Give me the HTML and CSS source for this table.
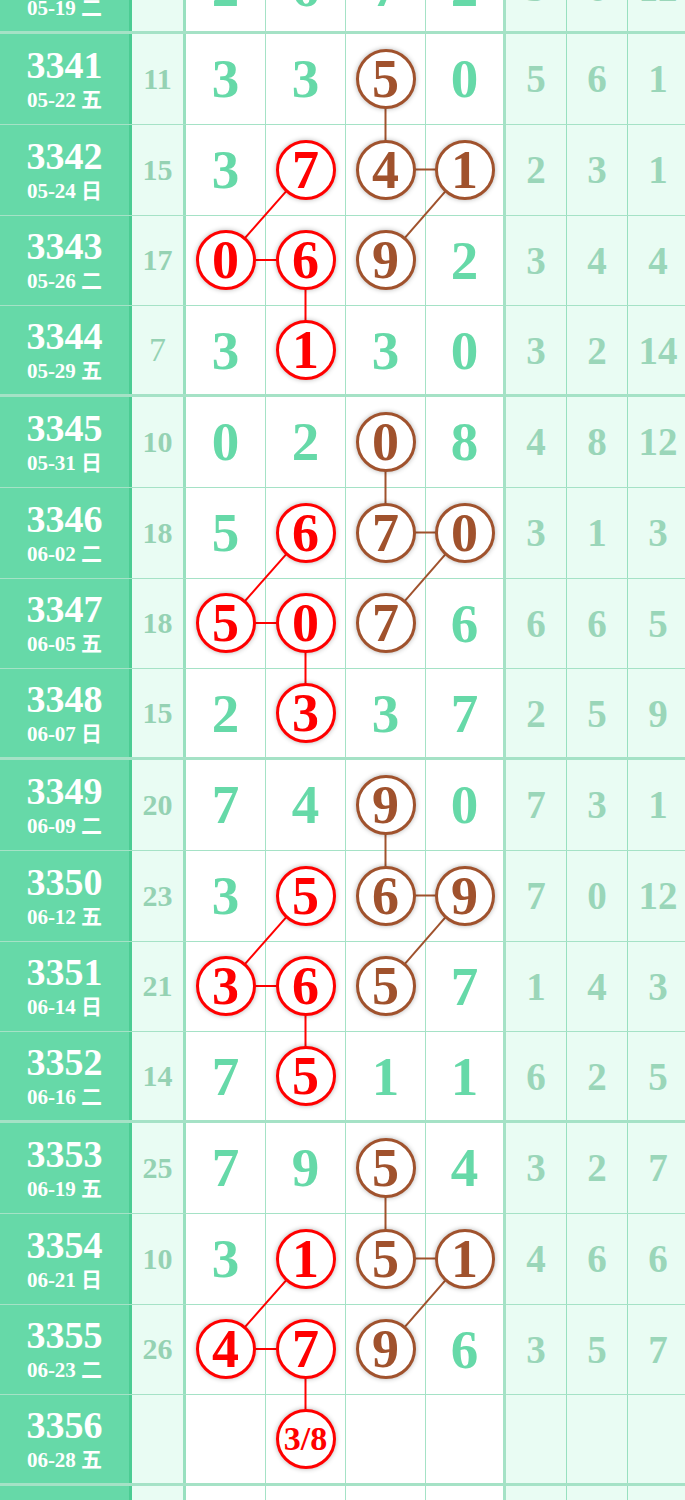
FILE: index.html
```html
<!DOCTYPE html>
<html lang="zh">
<head>
    <meta charset="UTF-8">
    <meta name="viewport" content="width=device-width, initial-scale=1.0">
    <title>走势图</title>
    <link rel="stylesheet" href="styles.css">
</head>
<body>
    <div class="chart">
        <svg class="links" width="689" height="1634" viewBox="0 0 689 1634">
            <g id="links">
                <g class="brown-line">
                    <line x1="385.5" y1="135.6" x2="385.5" y2="226.4" />
                    <line x1="385.5" y1="226.4" x2="464.5" y2="226.4" />
                    <line x1="464.5" y1="226.4" x2="385.5" y2="317.1" />
                </g>
                <g class="red-line">
                    <line x1="305.5" y1="226.4" x2="225.5" y2="317.1" />
                    <line x1="225.5" y1="317.1" x2="305.5" y2="317.1" />
                    <line x1="305.5" y1="317.1" x2="305.5" y2="406.9" />
                </g>
            </g>
            <use href="#links" y="363" />
            <use href="#links" y="726" />
            <use href="#links" y="1089" />
        </svg>

        <div class="row end">
            <div class="c-id"><b>3340</b><small>05-19 二</small></div>
            <div class="c-sum">17</div>
            <div class="c-num">2</div><div class="c-num">6</div><div class="c-num">7</div><div class="c-num end">2</div>
            <div class="c-tail">3</div><div class="c-tail">6</div><div class="c-tail">12</div>
        </div>

        <div class="row">
            <div class="c-id"><b>3341</b><small>05-22 五</small></div>
            <div class="c-sum">11</div>
            <div class="c-num">3</div><div class="c-num">3</div><div class="c-num"><span class="ball brown">5</span></div><div class="c-num end">0</div>
            <div class="c-tail">5</div><div class="c-tail">6</div><div class="c-tail">1</div>
        </div>
        <div class="row">
            <div class="c-id"><b>3342</b><small>05-24 日</small></div>
            <div class="c-sum">15</div>
            <div class="c-num">3</div><div class="c-num"><span class="ball red">7</span></div><div class="c-num"><span class="ball brown">4</span></div><div class="c-num end"><span class="ball brown">1</span></div>
            <div class="c-tail">2</div><div class="c-tail">3</div><div class="c-tail">1</div>
        </div>
        <div class="row">
            <div class="c-id"><b>3343</b><small>05-26 二</small></div>
            <div class="c-sum">17</div>
            <div class="c-num"><span class="ball red">0</span></div><div class="c-num"><span class="ball red">6</span></div><div class="c-num"><span class="ball brown">9</span></div><div class="c-num end">2</div>
            <div class="c-tail">3</div><div class="c-tail">4</div><div class="c-tail">4</div>
        </div>
        <div class="row end">
            <div class="c-id"><b>3344</b><small>05-29 五</small></div>
            <div class="c-sum thin">7</div>
            <div class="c-num">3</div><div class="c-num"><span class="ball red">1</span></div><div class="c-num">3</div><div class="c-num end">0</div>
            <div class="c-tail">3</div><div class="c-tail">2</div><div class="c-tail">14</div>
        </div>

        <div class="row">
            <div class="c-id"><b>3345</b><small>05-31 日</small></div>
            <div class="c-sum">10</div>
            <div class="c-num">0</div><div class="c-num">2</div><div class="c-num"><span class="ball brown">0</span></div><div class="c-num end">8</div>
            <div class="c-tail">4</div><div class="c-tail">8</div><div class="c-tail">12</div>
        </div>
        <div class="row">
            <div class="c-id"><b>3346</b><small>06-02 二</small></div>
            <div class="c-sum">18</div>
            <div class="c-num">5</div><div class="c-num"><span class="ball red">6</span></div><div class="c-num"><span class="ball brown">7</span></div><div class="c-num end"><span class="ball brown">0</span></div>
            <div class="c-tail">3</div><div class="c-tail">1</div><div class="c-tail">3</div>
        </div>
        <div class="row">
            <div class="c-id"><b>3347</b><small>06-05 五</small></div>
            <div class="c-sum">18</div>
            <div class="c-num"><span class="ball red">5</span></div><div class="c-num"><span class="ball red">0</span></div><div class="c-num"><span class="ball brown">7</span></div><div class="c-num end">6</div>
            <div class="c-tail">6</div><div class="c-tail">6</div><div class="c-tail">5</div>
        </div>
        <div class="row end">
            <div class="c-id"><b>3348</b><small>06-07 日</small></div>
            <div class="c-sum">15</div>
            <div class="c-num">2</div><div class="c-num"><span class="ball red">3</span></div><div class="c-num">3</div><div class="c-num end">7</div>
            <div class="c-tail">2</div><div class="c-tail">5</div><div class="c-tail">9</div>
        </div>

        <div class="row">
            <div class="c-id"><b>3349</b><small>06-09 二</small></div>
            <div class="c-sum">20</div>
            <div class="c-num">7</div><div class="c-num">4</div><div class="c-num"><span class="ball brown">9</span></div><div class="c-num end">0</div>
            <div class="c-tail">7</div><div class="c-tail">3</div><div class="c-tail">1</div>
        </div>
        <div class="row">
            <div class="c-id"><b>3350</b><small>06-12 五</small></div>
            <div class="c-sum">23</div>
            <div class="c-num">3</div><div class="c-num"><span class="ball red">5</span></div><div class="c-num"><span class="ball brown">6</span></div><div class="c-num end"><span class="ball brown">9</span></div>
            <div class="c-tail">7</div><div class="c-tail">0</div><div class="c-tail">12</div>
        </div>
        <div class="row">
            <div class="c-id"><b>3351</b><small>06-14 日</small></div>
            <div class="c-sum">21</div>
            <div class="c-num"><span class="ball red">3</span></div><div class="c-num"><span class="ball red">6</span></div><div class="c-num"><span class="ball brown">5</span></div><div class="c-num end">7</div>
            <div class="c-tail">1</div><div class="c-tail">4</div><div class="c-tail">3</div>
        </div>
        <div class="row end">
            <div class="c-id"><b>3352</b><small>06-16 二</small></div>
            <div class="c-sum">14</div>
            <div class="c-num">7</div><div class="c-num"><span class="ball red">5</span></div><div class="c-num">1</div><div class="c-num end">1</div>
            <div class="c-tail">6</div><div class="c-tail">2</div><div class="c-tail">5</div>
        </div>

        <div class="row">
            <div class="c-id"><b>3353</b><small>06-19 五</small></div>
            <div class="c-sum">25</div>
            <div class="c-num">7</div><div class="c-num">9</div><div class="c-num"><span class="ball brown">5</span></div><div class="c-num end">4</div>
            <div class="c-tail">3</div><div class="c-tail">2</div><div class="c-tail">7</div>
        </div>
        <div class="row">
            <div class="c-id"><b>3354</b><small>06-21 日</small></div>
            <div class="c-sum">10</div>
            <div class="c-num">3</div><div class="c-num"><span class="ball red">1</span></div><div class="c-num"><span class="ball brown">5</span></div><div class="c-num end"><span class="ball brown">1</span></div>
            <div class="c-tail">4</div><div class="c-tail">6</div><div class="c-tail">6</div>
        </div>
        <div class="row">
            <div class="c-id"><b>3355</b><small>06-23 二</small></div>
            <div class="c-sum">26</div>
            <div class="c-num"><span class="ball red">4</span></div><div class="c-num"><span class="ball red">7</span></div><div class="c-num"><span class="ball brown">9</span></div><div class="c-num end">6</div>
            <div class="c-tail">3</div><div class="c-tail">5</div><div class="c-tail">7</div>
        </div>
        <div class="row end">
            <div class="c-id"><b>3356</b><small>06-28 五</small></div>
            <div class="c-sum"></div>
            <div class="c-num"></div><div class="c-num"><span class="ball red small">3/8</span></div><div class="c-num"></div><div class="c-num end"></div>
            <div class="c-tail"></div><div class="c-tail"></div><div class="c-tail"></div>
        </div>

        <div class="row">
            <div class="c-id"></div>
            <div class="c-sum"></div>
            <div class="c-num"></div><div class="c-num"></div><div class="c-num"></div><div class="c-num end"></div>
            <div class="c-tail"></div><div class="c-tail"></div><div class="c-tail"></div>
        </div>
    </div>
</body>
</html>
```

FILE: styles.css
```css
body {
    margin: 0;
    padding: 0;
    overflow: hidden;
    background: #fff;
    font-family: "Liberation Serif", "Noto Sans CJK SC", serif;
    font-weight: bold;
}
.chart {
    position: relative;
    width: 689px;
    margin-top: -56.75px;
}
.links {
    position: absolute;
    top: 0;
    left: 0;
    z-index: 1;
    pointer-events: none;
}
.red-line line {
    stroke: #ff0000;
    stroke-width: 2;
}
.brown-line line {
    stroke: #a0522d;
    stroke-width: 2;
}
.row {
    display: grid;
    grid-template-columns: 132px 54px 80px 80px 80px 80px 61px 61px 61px;
    height: 90.75px;
    box-sizing: border-box;
    border-bottom: 1px solid rgba(40, 185, 120, 0.42);
}
.row.end {
    border-bottom-width: 3px;
}
.row > div {
    box-sizing: border-box;
    display: flex;
    align-items: center;
    justify-content: center;
    border-right: 1px solid rgba(40, 185, 120, 0.42);
}
.c-id {
    flex-direction: column;
    background: #66d9a8;
    color: #fff;
    border-right-width: 3px !important;
}
.c-id b {
    font-size: 38px;
    line-height: 36px;
}
.c-id small {
    font-size: 21px;
    line-height: 22px;
    margin-top: 6px;
}
.c-sum {
    background: #e9fcf3;
    color: #95d2b3;
    font-size: 30px;
    border-right-width: 3px !important;
}
.c-sum.thin {
    font-weight: normal;
    font-size: 34px;
}
.c-num {
    background: #fff;
    color: #66d9a8;
    font-size: 55px;
}
.c-num.end {
    border-right-width: 3px !important;
}
.c-tail {
    background: #e9fcf3;
    color: #9ad6b9;
    font-size: 39px;
}
.ball {
    position: relative;
    z-index: 2;
    display: flex;
    align-items: center;
    justify-content: center;
    width: 60px;
    height: 60px;
    box-sizing: border-box;
    border-radius: 50%;
    border: 3px solid;
    background: #fff;
    font-size: 54px;
    line-height: 1;
    box-shadow: 0 0 5px rgba(0, 0, 0, 0.3);
}
.ball.red {
    color: #ff0000;
    border-color: #ff0000;
}
.ball.brown {
    color: #a0522d;
    border-color: #a0522d;
}
.ball.small {
    font-size: 34px;
}
```
